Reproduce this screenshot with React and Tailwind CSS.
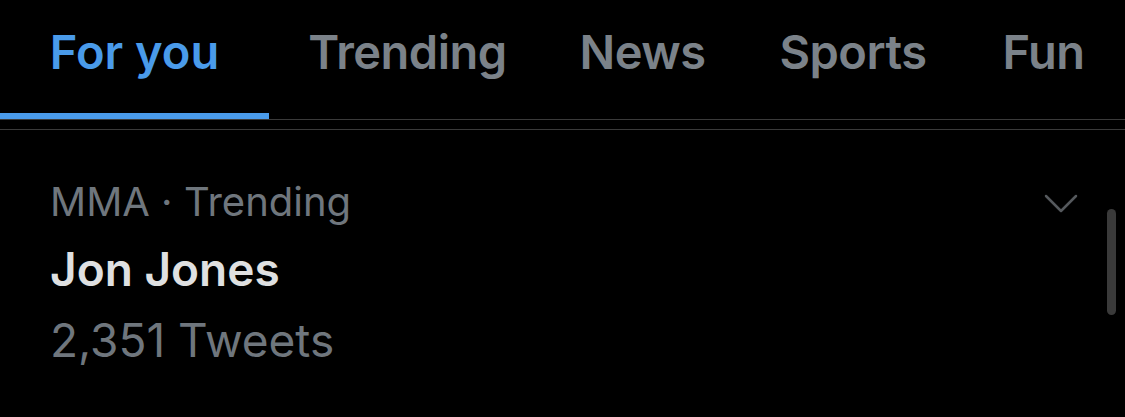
import React from 'react';

const tabs = [
  { label: 'For you', width: 'w-[269px]' },
  { label: 'Trending', width: 'w-[277px]' },
  { label: 'News', width: 'w-[193px]' },
  { label: 'Sports', width: 'w-[228px]' },
  { label: 'Fun', width: 'w-[153px]' },
];

const App = () => {
  return (
    <div className="w-[1125px] h-[417px] bg-black overflow-hidden font-['Inter','Liberation_Sans',sans-serif]">
      {/* tab bar */}
      <div className="flex h-[120px] border-b border-[#3a3a3a]">
        {tabs.map((tab, i) => (
          <div key={tab.label} className={`flex flex-col justify-end shrink-0 ${tab.width}`}>
            <div
              className={`pb-[36px] text-center text-[47px] leading-[50px] font-semibold whitespace-nowrap ${
                i === 0 ? 'text-[#4a9bea]' : 'text-[#7b8289] tracking-[-0.5px]'
              }`}
            >
              {tab.label}
            </div>
            <div className={`h-[6px] ${i === 0 ? 'bg-[#4a9bea]' : ''}`} />
          </div>
        ))}
      </div>
      <div className="mt-[9px] border-t border-[#3a3a3a]" />

      {/* trend row */}
      <div className="flex pl-[50px] pr-[9px] pt-[49px]">
        <div className="flex-1">
          <div className="text-[40px] leading-[46px] text-[#6f767d]">MMA · Trending</div>
          <div className="mt-[9px] text-[46px] leading-[70px] font-semibold text-[#dfe0e1]">Jon Jones</div>
          <div className="mt-[1px] text-[46px] leading-[70px] text-[#6f767d]">2,351 Tweets</div>
        </div>
        <div className="flex flex-col items-end">
          <svg width="34" height="20" viewBox="0 0 34 20" className="mr-[38px] mt-[15px]">
            <path d="M2 2 L17 17 L32 2" fill="none" stroke="#55595d" strokeWidth="2.5" strokeLinecap="round" strokeLinejoin="round" />
          </svg>
          <div className="mt-[-5px] w-[9px] h-[106px] rounded-full bg-[#3a3a3a]" />
        </div>
      </div>
    </div>
  );
};

export default App;
